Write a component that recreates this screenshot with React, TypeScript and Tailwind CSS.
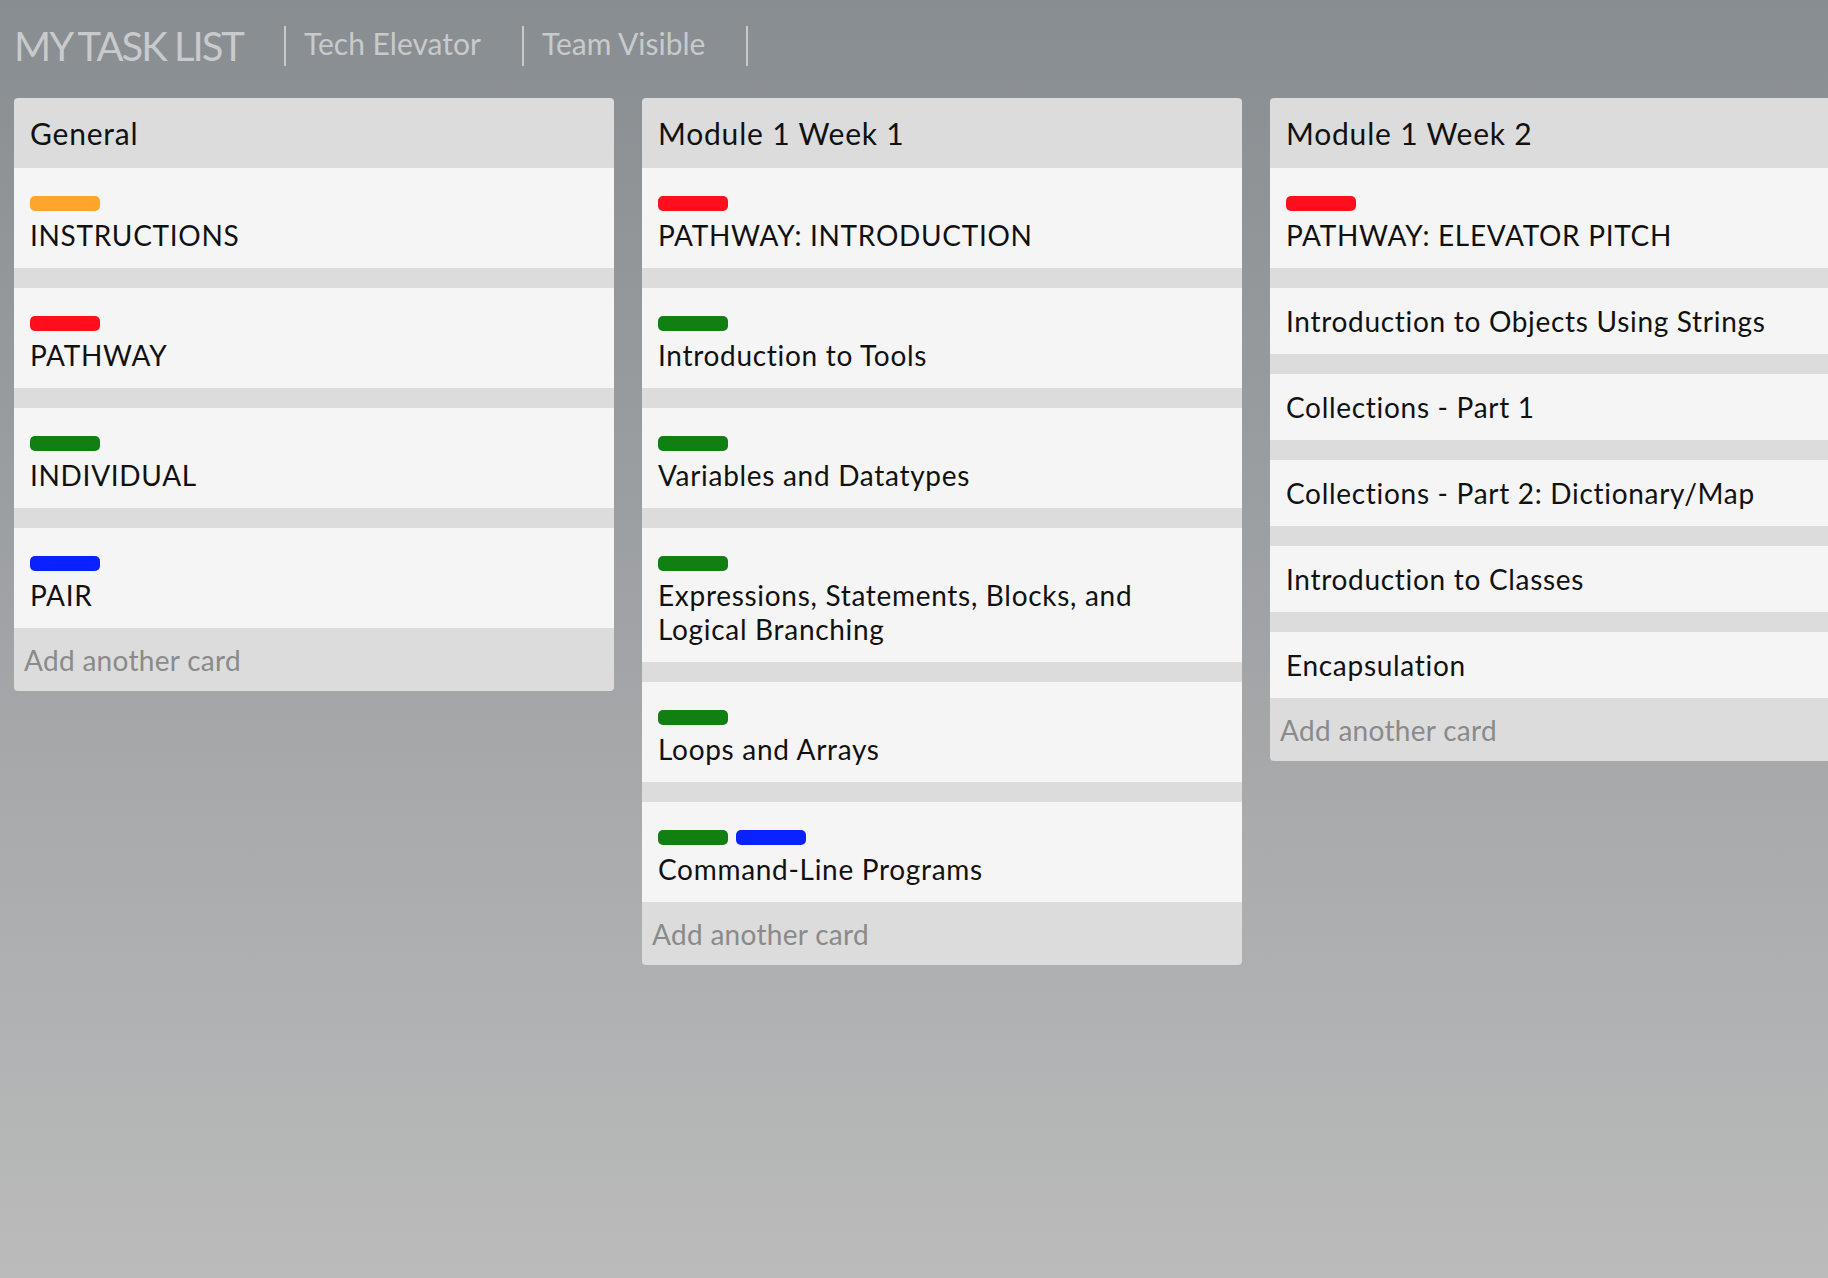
const TAG = {
  orange: 'bg-[#ffa52c]',
  red: 'bg-[#ff0f1e]',
  green: 'bg-[#127f12]',
  blue: 'bg-[#0a22ff]',
};

type Tag = keyof typeof TAG;

interface Card {
  title: string;
  tags?: Tag[];
}

interface List {
  name: string;
  cards: Card[];
}

const lists: List[] = [
  {
    name: 'General',
    cards: [
      { title: 'INSTRUCTIONS', tags: ['orange'] },
      { title: 'PATHWAY', tags: ['red'] },
      { title: 'INDIVIDUAL', tags: ['green'] },
      { title: 'PAIR', tags: ['blue'] },
    ],
  },
  {
    name: 'Module 1 Week 1',
    cards: [
      { title: 'PATHWAY: INTRODUCTION', tags: ['red'] },
      { title: 'Introduction to Tools', tags: ['green'] },
      { title: 'Variables and Datatypes', tags: ['green'] },
      { title: 'Expressions, Statements, Blocks, and Logical Branching', tags: ['green'] },
      { title: 'Loops and Arrays', tags: ['green'] },
      { title: 'Command-Line Programs', tags: ['green', 'blue'] },
    ],
  },
  {
    name: 'Module 1 Week 2',
    cards: [
      { title: 'PATHWAY: ELEVATOR PITCH', tags: ['red'] },
      { title: 'Introduction to Objects Using Strings' },
      { title: 'Collections - Part 1' },
      { title: 'Collections - Part 2: Dictionary/Map' },
      { title: 'Introduction to Classes' },
      { title: 'Encapsulation' },
    ],
  },
];

const navLinks = ['Tech Elevator', 'Team Visible'];

function TaskCard({ card }: { card: Card }) {
  return (
    <div className="bg-[#f5f5f5] px-[16px] py-[16px]">
      {card.tags && (
        <div className="flex gap-[8px] mt-[12px] mb-[7px]">
          {card.tags.map((t, i) => (
            <span key={i} className={`block h-[15px] w-[70px] rounded-[5px] ${TAG[t]}`} />
          ))}
        </div>
      )}
      <p className="text-[28px] leading-[34px] tracking-[0.7px] text-[#111] pr-[60px]">{card.title}</p>
    </div>
  );
}

function TaskList({ list }: { list: List }) {
  return (
    <section className="w-[600px] shrink-0 bg-[#dcdcdc] rounded-[4px] overflow-hidden">
      <h2 className="h-[70px] px-[16px] flex items-center text-[30px] tracking-[0.8px] text-[#111]">{list.name}</h2>
      <div className="flex flex-col gap-[20px]">
        {list.cards.map((c, i) => (
          <TaskCard key={i} card={c} />
        ))}
      </div>
      <div className="h-[63px] pl-[10px] flex items-center text-[28px] tracking-[0.3px] text-[#8a8a8a]">Add another card</div>
    </section>
  );
}

export default function App() {
  return (
    <div
      className="w-full min-h-screen overflow-hidden bg-linear-to-b from-[#888d91] to-[#bbbbbb]"
      style={{ fontFamily: 'Lato, "Noto Sans", sans-serif' }}
    >
      {/* top bar */}
      <header className="h-[98px] pt-[26px] pl-[14px] flex items-start text-[#c8cacc]">
        <div className="h-[40px] pr-[41px] border-r-2 border-[#c8cacc]">
          <h1 className="text-[40px] leading-[40px] tracking-[-2px]">MY TASK LIST</h1>
        </div>
        {navLinks.map((l) => (
          <a key={l} href="#" className="h-[40px] pl-[18px] pr-[41px] border-r-2 border-[#c8cacc]">
            <span className="block text-[30px] leading-[34px]">{l}</span>
          </a>
        ))}
      </header>

      {/* board */}
      <main className="flex items-start gap-[28px] pl-[14px]">
        {lists.map((l) => (
          <TaskList key={l.name} list={l} />
        ))}
      </main>
    </div>
  );
}
